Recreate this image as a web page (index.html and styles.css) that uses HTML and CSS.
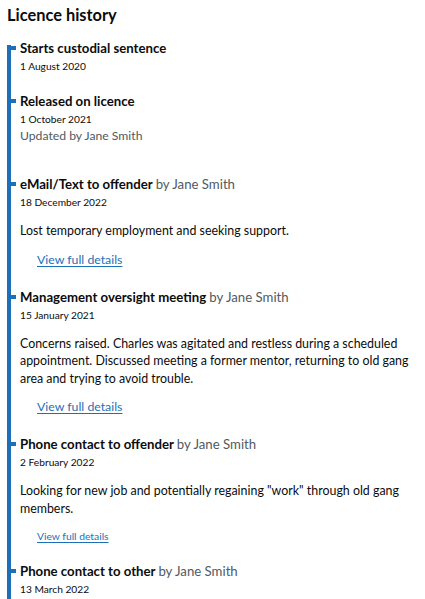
FILE: index.html
```html
<!DOCTYPE html>
<html lang="en">
<head>
<meta charset="utf-8">
<title>Licence history</title>
<link rel="stylesheet" href="styles.css">
</head>
<body>
<h2 class="title">Licence history</h2>
<div class="timeline">
  <div class="item">
    <h3 class="item-title">Starts custodial sentence</h3>
    <p class="item-date">1 August 2020</p>
  </div>
  <div class="item item-extra">
    <h3 class="item-title">Released on licence</h3>
    <p class="item-date">1 October 2021</p>
    <p class="item-byline">Updated by Jane Smith</p>
  </div>
  <div class="item item-linked">
    <h3 class="item-title">eMail/Text to offender <span class="by">by Jane Smith</span></h3>
    <p class="item-date">18 December 2022</p>
    <p class="item-body">Lost temporary employment and seeking support.</p>
    <a class="item-link" href="#">View full details</a>
  </div>
  <div class="item item-linked">
    <h3 class="item-title">Management oversight meeting <span class="by">by Jane Smith</span></h3>
    <p class="item-date">15 January 2021</p>
    <p class="item-body">Concerns raised. Charles was agitated and restless during a scheduled appointment. Discussed meeting a former mentor, returning to old gang area and trying to avoid trouble.</p>
    <a class="item-link" href="#">View full details</a>
  </div>
  <div class="item item-linked-small">
    <h3 class="item-title">Phone contact to offender <span class="by">by Jane Smith</span></h3>
    <p class="item-date">2 February 2022</p>
    <p class="item-body">Looking for new job and potentially regaining "work" through old gang members.</p>
    <a class="item-link item-link-small" href="#">View full details</a>
  </div>
  <div class="item">
    <h3 class="item-title">Phone contact to other <span class="by">by Jane Smith</span></h3>
    <p class="item-date">13 March 2022</p>
  </div>
</div>
</body>
</html>
```
FILE: styles.css
```css
html, body {
  margin: 0;
  padding: 0;
  background: #ffffff;
}
body {
  padding: 4px 7px 0 7px;
  font-family: Lato, "Liberation Sans", sans-serif;
  color: #0b0c0c;
  overflow: hidden;
}
.title {
  margin: 0 0 13px 0;
  font-size: 16.4px;
  line-height: 22px;
  font-weight: 700;
}
.timeline {
  position: relative;
  padding-left: 13px;
  display: flex;
  flex-direction: column;
  gap: 16px;
}
.timeline::before {
  content: "";
  position: absolute;
  left: 0;
  top: 6px;
  bottom: 0;
  width: 4px;
  background: #1d70b8;
}
.item {
  position: relative;
  display: flex;
  flex-direction: column;
}
.item::before {
  content: "";
  position: absolute;
  left: -13px;
  top: 7px;
  width: 9px;
  height: 4px;
  background: #1d70b8;
}
.item-extra {
  padding-bottom: 16.5px;
}
.item-linked {
  padding-bottom: 3px;
}
.item-linked-small {
  padding-bottom: 2px;
}
.item-title {
  margin: 0;
  font-size: 13.2px;
  line-height: 18px;
  font-weight: 700;
}
.by {
  font-weight: 400;
  color: #505a5f;
}
.item-date {
  margin: 0;
  font-size: 10.2px;
  line-height: 19px;
}
.item-byline {
  margin: -1.5px 0 0 0;
  font-size: 12.2px;
  line-height: 15px;
  color: #505a5f;
}
.item-body {
  margin: 10px 0 0 0;
  font-size: 12.4px;
  line-height: 17.5px;
}
.item-link {
  margin: 11px 0 0 17px;
  align-self: flex-start;
  font-size: 12.3px;
  line-height: 18px;
  color: #1d70b8;
  text-decoration: underline;
  text-underline-offset: 2px;
}
.item-link-small {
  font-size: 10.3px;
  line-height: 16px;
}
```
